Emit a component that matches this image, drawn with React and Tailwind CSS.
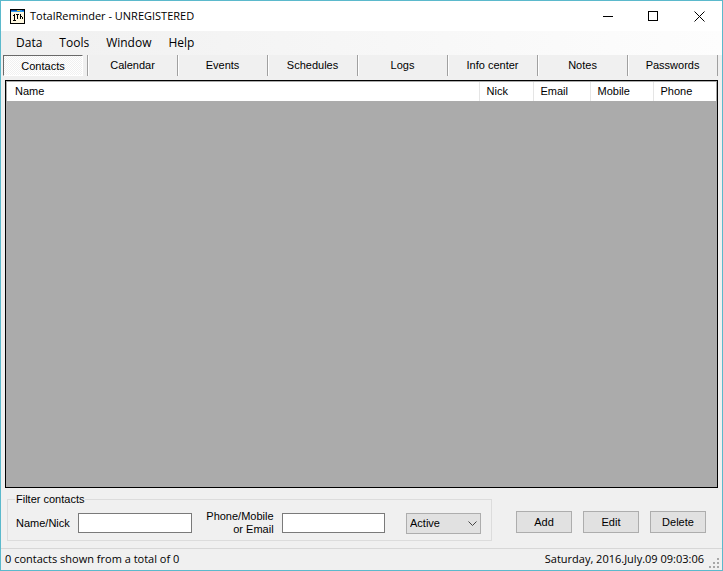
import { useState } from "react";

const menus = ["Data", "Tools", "Window", "Help"];
const tabs = [
  "Contacts",
  "Calendar",
  "Events",
  "Schedules",
  "Logs",
  "Info center",
  "Notes",
  "Passwords",
];
const columns = [
  { name: "Name", width: "" },
  { name: "Nick", width: "w-[54px]" },
  { name: "Email", width: "w-[57px]" },
  { name: "Mobile", width: "w-[63px]" },
  { name: "Phone", width: "w-[63px]" },
];

function AppIcon() {
  return (
    <svg width="15" height="15" viewBox="0 0 15 15" shapeRendering="crispEdges" aria-hidden="true">
      <rect width="15" height="15" fill="#000" />
      <rect x="1" y="3" width="13" height="11" fill="#fff8e0" />
      <rect x="1" y="1" width="13" height="2" fill="#2f9be8" />
      <rect x="1" y="1" width="6" height="1" fill="#0a4ab0" />
      <rect x="7" y="1" width="3" height="1" fill="#f5c518" />
      <rect x="12" y="1" width="2" height="1" fill="#0a4ab0" />
      <path
        d="M4.5 5v7M3 6.5h1M3 11.5h3M6 5.500h3M7.5 5v5M10.5 5v5M11 7.5h1M12.5 8v2"
        stroke="#000"
        fill="none"
      />
    </svg>
  );
}

function TitleBar() {
  return (
    <header className="flex h-[30px] items-center bg-white pl-[9px]">
      <AppIcon />
      <h1 className="ml-[5px] flex-1 font-['Open_Sans',sans-serif] text-[11px]">
        TotalReminder - UNREGISTERED
      </h1>
      <button aria-label="Minimize" className="flex h-full w-[46px] items-center justify-center">
        <svg width="11" height="11" viewBox="0 0 11 11" shapeRendering="crispEdges">
          <path d="M0 5.5h10" stroke="#000" />
        </svg>
      </button>
      <button aria-label="Maximize" className="flex h-full w-[45px] items-center justify-center">
        <svg width="11" height="11" viewBox="0 0 11 11" shapeRendering="crispEdges">
          <path d="M.5 .5h9v9h-9z" stroke="#000" fill="none" />
        </svg>
      </button>
      <button aria-label="Close" className="flex h-full w-[46px] items-center justify-center">
        <svg width="11" height="11" viewBox="0 0 11 11">
          <path d="M.5 .5l10 10M10.5 .5l-10 10" stroke="#000" />
        </svg>
      </button>
    </header>
  );
}

function Tabs({ active, onChange }) {
  return (
    <div role="tablist" className="mr-1 flex h-[21px]">
      {tabs.map((tab, i) => (
        <div
          key={tab}
          className={`flex min-w-0 border-r border-[#a0a0a0] ${
            i === 0 ? "flex-[87]" : "flex-[90]"
          }`}
        >
          <button
            role="tab"
            aria-selected={active === tab}
            onClick={() => onChange(tab)}
            className={`flex-1 border whitespace-nowrap ${i === 0 ? "mr-1 ml-[2px]" : ""} ${
              active === tab
                ? "border-t-[#696969] border-r-white border-b-white border-l-[#696969] bg-[repeating-conic-gradient(#fff_0_25%,#f0f0f0_0_50%)] bg-[length:2px_2px] pt-px"
                : "border-transparent border-l-white"
            }`}
          >
            {tab}
          </button>
        </div>
      ))}
    </div>
  );
}

function ContactsTable() {
  return (
    <div className="mx-1 mt-1 flex-1 border border-black bg-[#ababab] p-px">
      <table className="w-full table-fixed border-collapse bg-white text-left">
        <thead>
          <tr className="h-[19px]">
            {columns.map((col) => (
              <th
                key={col.name}
                className={`border-r border-[#e5e5e5] pl-[7px] font-normal first:pl-2 last:border-r-0 ${col.width}`}
              >
                {col.name}
              </th>
            ))}
          </tr>
        </thead>
        <tbody></tbody>
      </table>
    </div>
  );
}

function FilterBar() {
  const input = "h-5 w-0 min-w-0 border border-[#7a7a7a] bg-white px-1 outline-none";
  const button = "h-[22px] w-14 border border-[#adadad] bg-[#e1e1e1]";

  return (
    <div className="flex items-start pt-[5px] pr-4 pl-[6px]">
      <fieldset className="h-12 min-w-0 flex-1 border border-[#dcdcdc] pl-[7px]">
        <legend className="h-[13px] px-px leading-[13px]">Filter contacts</legend>
        <div className="flex items-center pt-1 pr-[10px]">
          <label htmlFor="name" className="w-[63px] shrink-0 pl-px">
            Name/Nick
          </label>
          <input id="name" className={`${input} flex-[115]`} />
          <label
            htmlFor="phone"
            className="mr-2 ml-[14px] shrink-0 text-right leading-[13px] whitespace-nowrap"
          >
            Phone/Mobile
            <br />
            or Email
          </label>
          <input id="phone" className={`${input} flex-[103]`} />
          <div className="relative ml-[21px] shrink-0">
            <select
              aria-label="Status"
              className="block h-[21px] w-[75px] appearance-none border border-[#adadad] bg-[#e1e1e1] pl-[3px]"
            >
              <option>Active</option>
              <option>Inactive</option>
            </select>
            <svg
              width="9"
              height="6"
              viewBox="0 0 9 6"
              className="pointer-events-none absolute top-2 right-1"
            >
              <path d="M.5 .5l4 4 4-4" stroke="#444" fill="none" />
            </svg>
          </div>
        </div>
      </fieldset>
      <div className="mt-[18px] ml-6 flex shrink-0 gap-[11px]">
        <button className={button}>Add</button>
        <button className={button}>Edit</button>
        <button className={button}>Delete</button>
      </div>
    </div>
  );
}

function StatusBar() {
  return (
    <footer className="mt-[7px] flex h-[22px] items-center border-t border-[#d7d7d7] pr-[3px] pl-1 font-['Open_Sans',sans-serif] text-[11px]">
      <span className="flex-1">0 contacts shown from a total of 0</span>
      <span>Saturday, 2016.July.09 09:03:06</span>
      <svg
        width="10"
        height="10"
        viewBox="0 0 10 10"
        className="mb-[2px] ml-[5px] self-end"
        fill="#a8a8a8"
        shapeRendering="crispEdges"
        aria-hidden="true"
      >
        <path d="M8 0h2v2h-2zM4 4h2v2h-2zM8 4h2v2h-2zM0 8h2v2h-2zM4 8h2v2h-2zM8 8h2v2h-2z" />
      </svg>
    </footer>
  );
}

export default function App() {
  const [active, setActive] = useState("Contacts");

  return (
    <div className="flex min-h-screen flex-col border border-[#5bb9cc] bg-[#f0f0f0] font-['Liberation_Sans',sans-serif] text-[11px] text-black">
      <TitleBar />
      <nav className="flex h-6 items-center bg-linear-to-r from-[#f0f0f0] to-[#fdfdfd] pl-[15px] font-['Open_Sans',sans-serif] text-[12px]">
        {menus.map((menu) => (
          <button key={menu} className="mr-[17px]">
            {menu}
          </button>
        ))}
      </nav>
      <Tabs active={active} onChange={setActive} />
      <ContactsTable />
      <FilterBar />
      <StatusBar />
    </div>
  );
}
